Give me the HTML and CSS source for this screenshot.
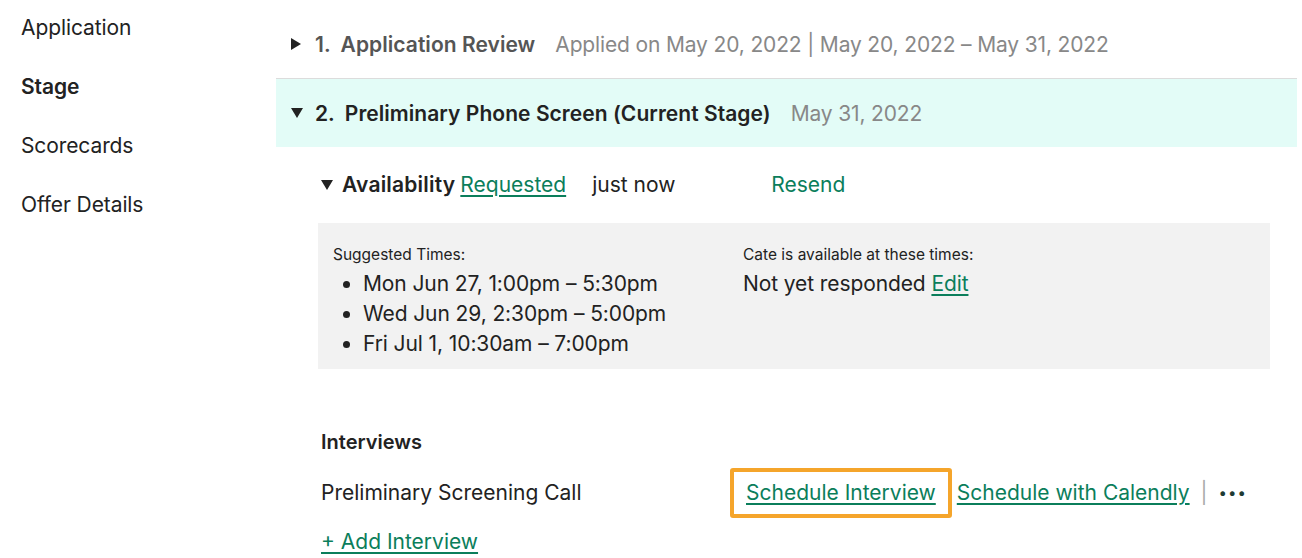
FILE: index.html
```html
<!DOCTYPE html>
<html lang="en">
<head>
    <meta charset="UTF-8">
    <title>Candidate Stage</title>
    <link rel="stylesheet" href="styles.css">
</head>
<body>

<div class="page">
    <ul class="sidebar">
        <li>Application</li>
        <li class="active">Stage</li>
        <li>Scorecards</li>
        <li>Offer Details</li>
    </ul>

    <div class="main">
        <div class="stage-row">
            <span class="caret caret-right"></span>
            <span class="stage-num">1.</span>
            <span class="stage-name">Application Review</span>
            <span class="stage-date">Applied on May 20, 2022 | May 20, 2022 – May 31, 2022</span>
        </div>
        <div class="stage-row current">
            <span class="caret caret-down"></span>
            <span class="stage-num">2.</span>
            <span class="stage-name">Preliminary Phone Screen (Current Stage)</span>
            <span class="stage-date">May 31, 2022</span>
        </div>

        <div class="availability">
            <span class="caret caret-down small"></span>
            <span class="avail-title">Availability</span>
            <a href="#" class="link">Requested</a>
            <span class="avail-time">just now</span>
            <a href="#" class="link plain">Resend</a>
        </div>

        <div class="times-box">
            <div class="times-col">
                <div class="times-label">Suggested Times:</div>
                <ul class="times-list">
                    <li>Mon Jun 27, 1:00pm – 5:30pm</li>
                    <li>Wed Jun 29, 2:30pm – 5:00pm</li>
                    <li>Fri Jul 1, 10:30am – 7:00pm</li>
                </ul>
            </div>
            <div class="times-col">
                <div class="times-label">Cate is available at these times:</div>
                <div class="times-value">Not yet responded <a href="#" class="link">Edit</a></div>
            </div>
        </div>

        <div class="interviews">
            <h3>Interviews</h3>
            <div class="interview-row">
                <span class="interview-name">Preliminary Screening Call</span>
                <div class="interview-actions">
                    <span class="highlight"><a href="#" class="link">Schedule Interview</a></span>
                    <a href="#" class="link">Schedule with Calendly</a>
                    <span class="divider">|</span>
                    <span class="more">•••</span>
                </div>
            </div>
            <a href="#" class="link add">+ Add Interview</a>
        </div>
    </div>
</div>

</body>
</html>
```

FILE: styles.css
```css
body {
    margin: 0;
    font-family: Inter, "Liberation Sans", Arial, sans-serif;
    color: #222;
    background-color: #fff;
}
.page {
    display: flex;
}
.sidebar {
    list-style: none;
    margin: 0;
    padding: 16px 0 0 21px;
    width: 255px;
}
.sidebar li {
    font-size: 21px;
    line-height: 24px;
    margin-bottom: 35px;
    letter-spacing: -0.1px;
}
.sidebar .active {
    font-weight: 600;
}
.main {
    flex: 1;
    padding: 10px 5px 0 0;
}
.stage-row {
    display: flex;
    align-items: center;
    height: 68px;
    padding-left: 15px;
    font-size: 21px;
    border-bottom: 1px solid #dcdcdc;
}
.stage-row.current {
    background-color: #e3fcf7;
    border-bottom: none;
}
.stage-num {
    font-weight: 600;
    color: #555;
    margin-right: 10px;
}
.stage-name {
    font-weight: 600;
    color: #555;
    margin-right: 20px;
    letter-spacing: 0.05px;
}
.current .stage-num, .current .stage-name {
    color: #222;
}
.stage-date {
    color: #888;
    letter-spacing: -0.15px;
}
.caret {
    display: inline-block;
    width: 0;
    height: 0;
    margin-right: 14px;
}
.caret-right {
    border-top: 6px solid transparent;
    border-bottom: 6px solid transparent;
    border-left: 10px solid #222;
}
.caret-down {
    border-left: 6px solid transparent;
    border-right: 6px solid transparent;
    border-top: 10px solid #222;
    margin-right: 12px;
}
.caret.small {
    margin-right: 9px;
}
.link {
    color: #0b7e5b;
    text-decoration: underline;
    text-underline-offset: 3px;
}
.link.plain {
    text-decoration: none;
}
.availability {
    display: flex;
    align-items: center;
    padding: 26px 0 0 45px;
    font-size: 21px;
    line-height: 24px;
}
.avail-title {
    font-weight: 600;
    margin-right: 5px;
    letter-spacing: 0.2px;
}
.avail-time {
    margin: 0 96px 0 26px;
}
.times-box {
    display: flex;
    background-color: #f2f2f2;
    margin: 26px 27px 0 42px;
    padding: 22px 15px 0;
    height: 124px;
}
.times-col {
    width: 410px;
}
.times-label {
    font-size: 15.5px;
    line-height: 20px;
    margin-bottom: 4px;
}
.times-list {
    margin: 0;
    padding-left: 30px;
    font-size: 21px;
    line-height: 30px;
    letter-spacing: -0.1px;
}
.times-value {
    font-size: 21px;
    line-height: 30px;
    letter-spacing: -0.1px;
}
.interviews {
    padding: 61px 0 0 45px;
}
.interviews h3 {
    margin: 0 0 27px;
    font-size: 20px;
    line-height: 24px;
    font-weight: 600;
}
.interview-row {
    display: flex;
    align-items: center;
    font-size: 21px;
    line-height: 24px;
}
.interview-name {
    width: 409px;
}
.interview-actions {
    display: flex;
    align-items: center;
}
.highlight {
    border: 4px solid #f5a52b;
    border-radius: 3px;
    padding: 9px 12px;
    margin: -13px 5px -13px 0;
}
.divider {
    color: #aaa;
    margin: 0 11px;
}
.more {
    font-size: 15px;
    letter-spacing: 1px;
    color: #1e3b33;
}
.add {
    display: inline-block;
    margin-top: 25px;
    font-size: 21px;
    line-height: 24px;
}
```
